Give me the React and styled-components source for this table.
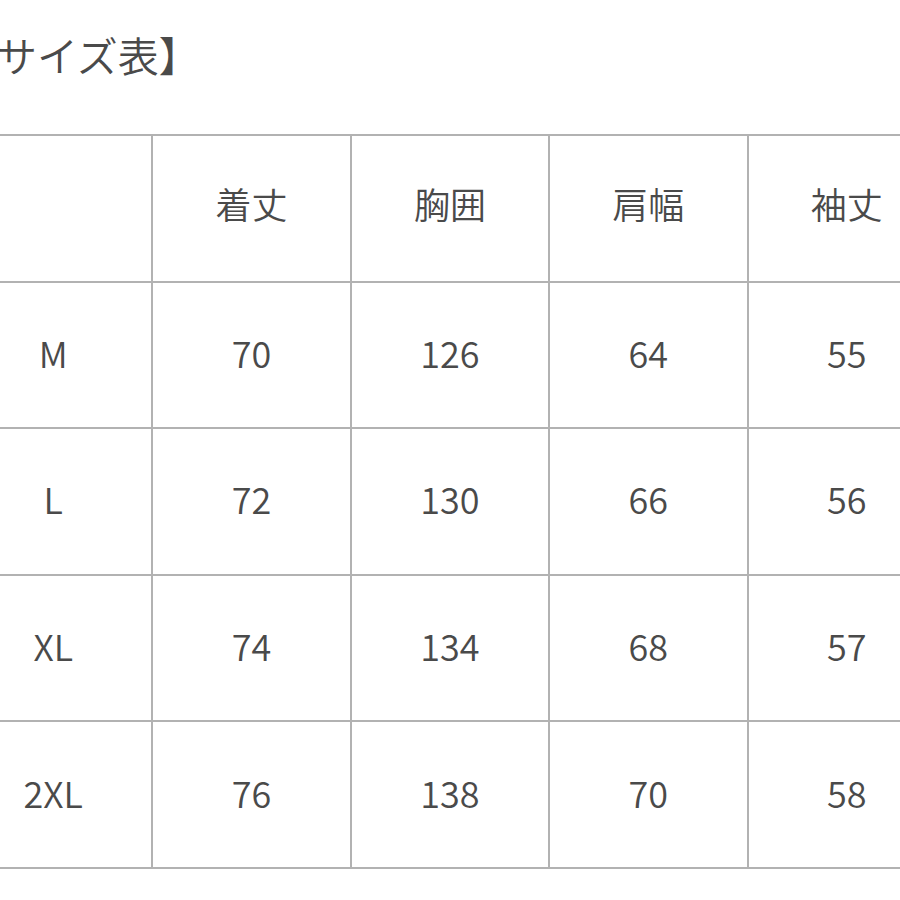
import React from "react";
import styled, { createGlobalStyle } from "styled-components";

const headers = ["", "着丈", "胸囲", "肩幅", "袖丈"];

const rows = [
  { size: "M", values: [70, 126, 64, 55] },
  { size: "L", values: [72, 130, 66, 56] },
  { size: "XL", values: [74, 134, 68, 57] },
  { size: "2XL", values: [76, 138, 70, 58] },
];

const GlobalStyle = createGlobalStyle`
  html, body {
    margin: 0;
    padding: 0;
    background: #fff;
    overflow: hidden;
  }
  body {
    font-family: "Noto Sans CJK JP", "Noto Sans", sans-serif;
    color: #4a4a4a;
  }
`;

const Page = styled.div`
  width: 900px;
  height: 900px;
  overflow: hidden;
  display: flex;
  flex-direction: column;
`;

const Title = styled.h1`
  margin: 33px 0 0 -45px;
  font-size: 41px;
  line-height: 42px;
  font-weight: 350;
  color: #4a4a4a;
  white-space: nowrap;
`;

const Table = styled.table`
  margin: 59px 0 0 -47px;
  border-collapse: collapse;
  table-layout: fixed;
  width: 992px;
  flex-shrink: 0;
`;

const Cell = styled.td`
  width: 196.4px;
  height: ${(p) => (p.$head ? "134.6px" : "138.6px")};
  padding: 0 0 ${(p) => (p.$head ? "10px" : "6px")};
  border: 2px solid #b2b2b2;
  text-align: center;
  vertical-align: middle;
  font-size: 36px;
  font-weight: 350;
  color: #4a4a4a;
`;

export default function App() {
  return (
    <Page>
      <GlobalStyle />
      <Title>【サイズ表】</Title>
      <Table>
        <tbody>
          <tr>
            {headers.map((h, i) => (
              <Cell key={i} as="th" $head>
                {h}
              </Cell>
            ))}
          </tr>
          {rows.map((r) => (
            <tr key={r.size}>
              <Cell>{r.size}</Cell>
              {r.values.map((v, i) => (
                <Cell key={i}>{v}</Cell>
              ))}
            </tr>
          ))}
        </tbody>
      </Table>
    </Page>
  );
}
